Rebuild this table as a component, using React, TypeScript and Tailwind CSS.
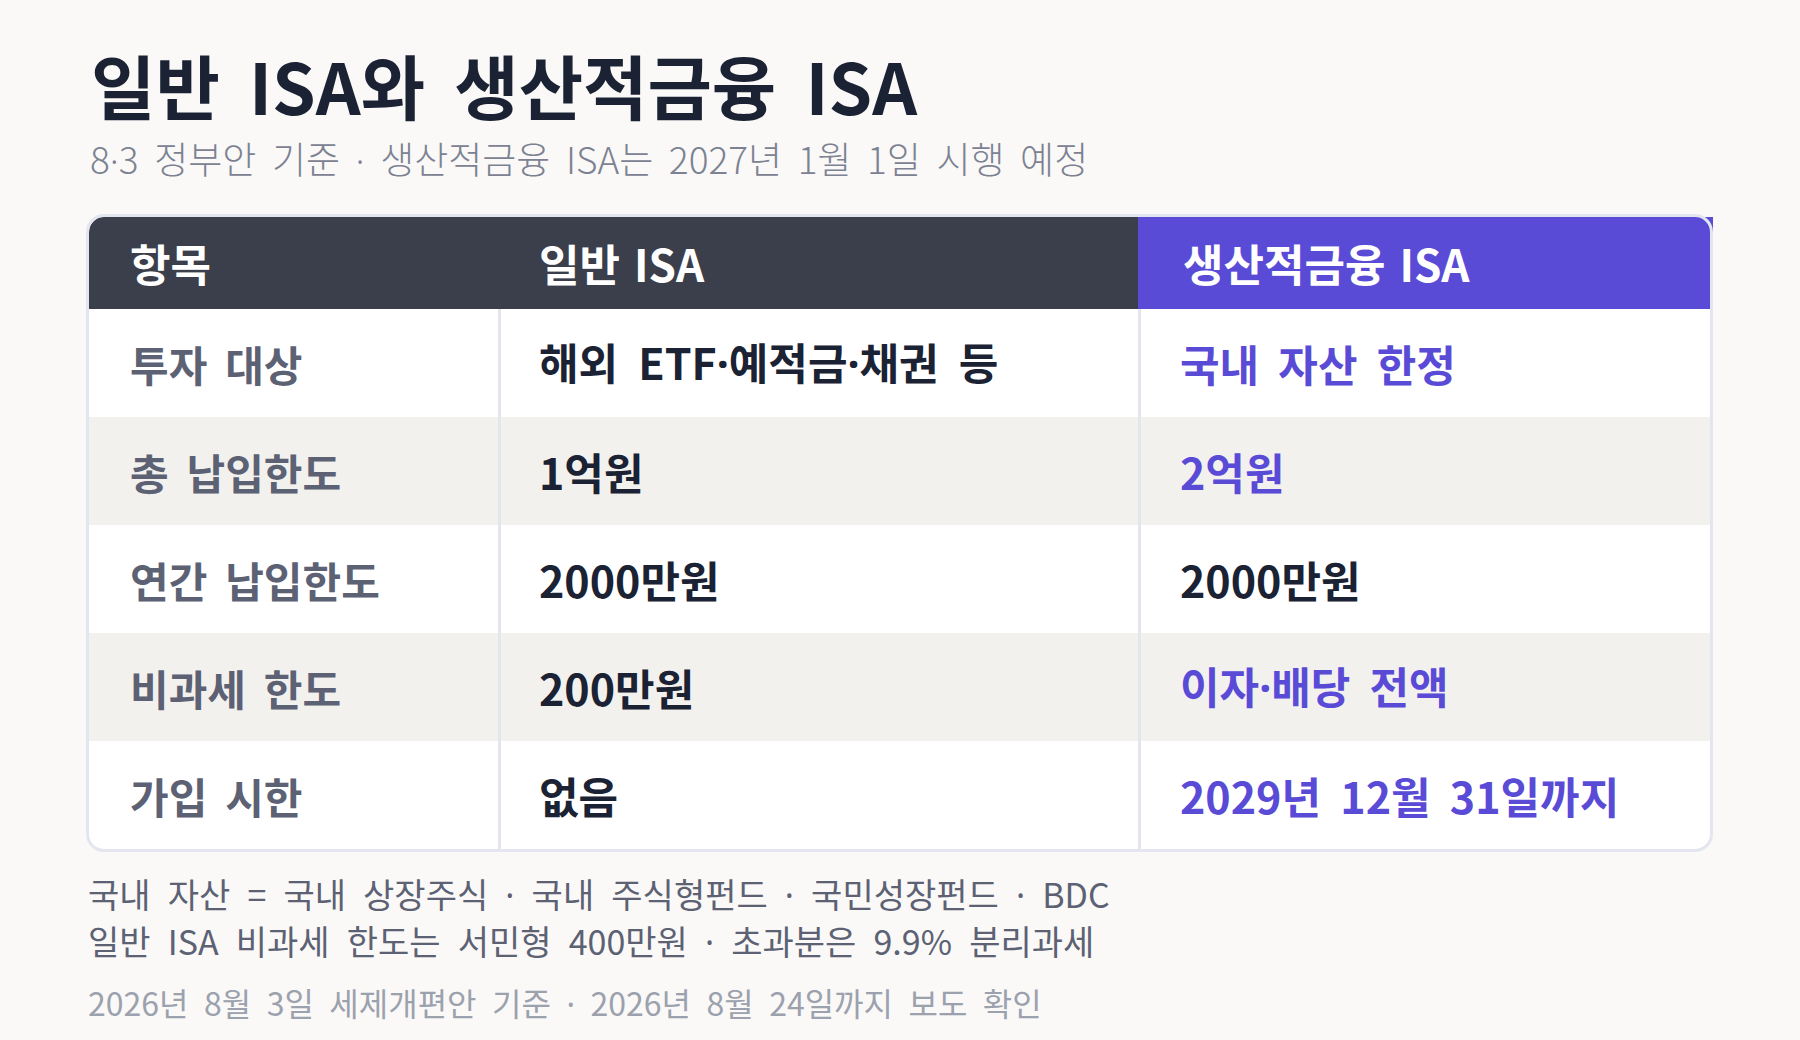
import React from 'react';

type Row = {
  label: string;
  normal: string;
  special: string;
  highlight: boolean;
};

const rows: Row[] = [
  { label: '투자 대상', normal: '해외 ETF·예적금·채권 등', special: '국내 자산 한정', highlight: true },
  { label: '총 납입한도', normal: '1억원', special: '2억원', highlight: true },
  { label: '연간 납입한도', normal: '2000만원', special: '2000만원', highlight: false },
  { label: '비과세 한도', normal: '200만원', special: '이자·배당 전액', highlight: true },
  { label: '가입 시한', normal: '없음', special: '2029년 12월 31일까지', highlight: true },
];

const font = { fontFamily: '"Noto Sans CJK KR", "Noto Sans", sans-serif' };

// CJK font draws the middle dot full width; the picture has a narrow one
function T({ text }: { text: string }) {
  const parts = text.split('·');
  return (
    <>
      {parts.map((p, i) => (
        <React.Fragment key={i}>
          {i > 0 && <span className="font-['Noto_Sans']">·</span>}
          {p}
        </React.Fragment>
      ))}
    </>
  );
}

export default function App() {
  return (
    <div className="min-h-screen w-full bg-[#faf9f7] pl-[86px] pt-[50px]" style={font}>
      <h1 className="ml-[5px] text-[70px] font-bold leading-none text-[#1a2233] [word-spacing:0.19em]">
        일반 ISA와 생산적금융 ISA
      </h1>
      <p className="ml-[4px] mt-[20px] text-[37px] font-light leading-none text-[#7c8292] [word-spacing:0.2em]">
        <T text="8·3 정부안 기준 · 생산적금융 ISA는 2027년 1월 1일 시행 예정" />
      </p>

      <div className="relative mt-[36px] w-[1627px] rounded-[18px] bg-white p-[3px]">
        {/* header */}
        <div className="mr-[-3px] grid h-[92px] grid-cols-[409px_640px_1fr] text-[44px] font-bold text-white [word-spacing:4px]">
          <div className="flex items-center rounded-tl-[15px] bg-[#3b3f4b] pl-[41px]">항목</div>
          <div className="flex items-center bg-[#3b3f4b] pl-[41px]">일반 ISA</div>
          <div className="flex items-center border-l-[3px] border-transparent bg-[#5a4bd7] pl-[42px]">
            생산적금융 ISA
          </div>
        </div>

        {rows.map((r, i) => {
          const last = i === rows.length - 1;
          const bg = i % 2 === 1 ? 'bg-[#f3f1ee]' : 'bg-white';
          return (
            <div
              key={r.label}
              className={`grid h-[108px] grid-cols-[409px_640px_1fr] font-bold ${bg} ${last ? 'rounded-b-[15px]' : ''}`}
            >
              <div className="flex items-center pl-[41px] text-[42px] text-[#5c6174] [word-spacing:0.2em]">{r.label}</div>
              <div className="flex items-center border-l-[3px] border-[#e3e6ee] pl-[38px] text-[43px] text-[#1a2233] [word-spacing:0.24em]">
                <span>
                  <T text={r.normal} />
                </span>
              </div>
              <div
                className={`flex items-center border-l-[3px] border-[#e3e6ee] pl-[39px] text-[43px] [word-spacing:0.22em] ${
                  r.highlight ? 'text-[#5a4bd7]' : 'text-[#1a2233]'
                }`}
              >
                <span>
                  <T text={r.special} />
                </span>
              </div>
            </div>
          );
        })}

        {/* frame drawn over the cells */}
        <div className="pointer-events-none absolute inset-0 rounded-[18px] border-[3px] border-[#e3e6ee]" />
      </div>

      <div className="ml-[2px] mt-[19px] text-[34px] leading-[46px] text-[#5c6174] [word-spacing:0.28em]">
        <p>
          <T text="국내 자산 = 국내 상장주식 · 국내 주식형펀드 · 국민성장펀드 · BDC" />
        </p>
        <p>
          <T text="일반 ISA 비과세 한도는 서민형 400만원 · 초과분은 9.9% 분리과세" />
        </p>
      </div>
      <p className="ml-[2px] mt-[21px] text-[32px] leading-none text-[#9ca1ae] [word-spacing:0.26em]">
        <T text="2026년 8월 3일 세제개편안 기준 · 2026년 8월 24일까지 보도 확인" />
      </p>
    </div>
  );
}
